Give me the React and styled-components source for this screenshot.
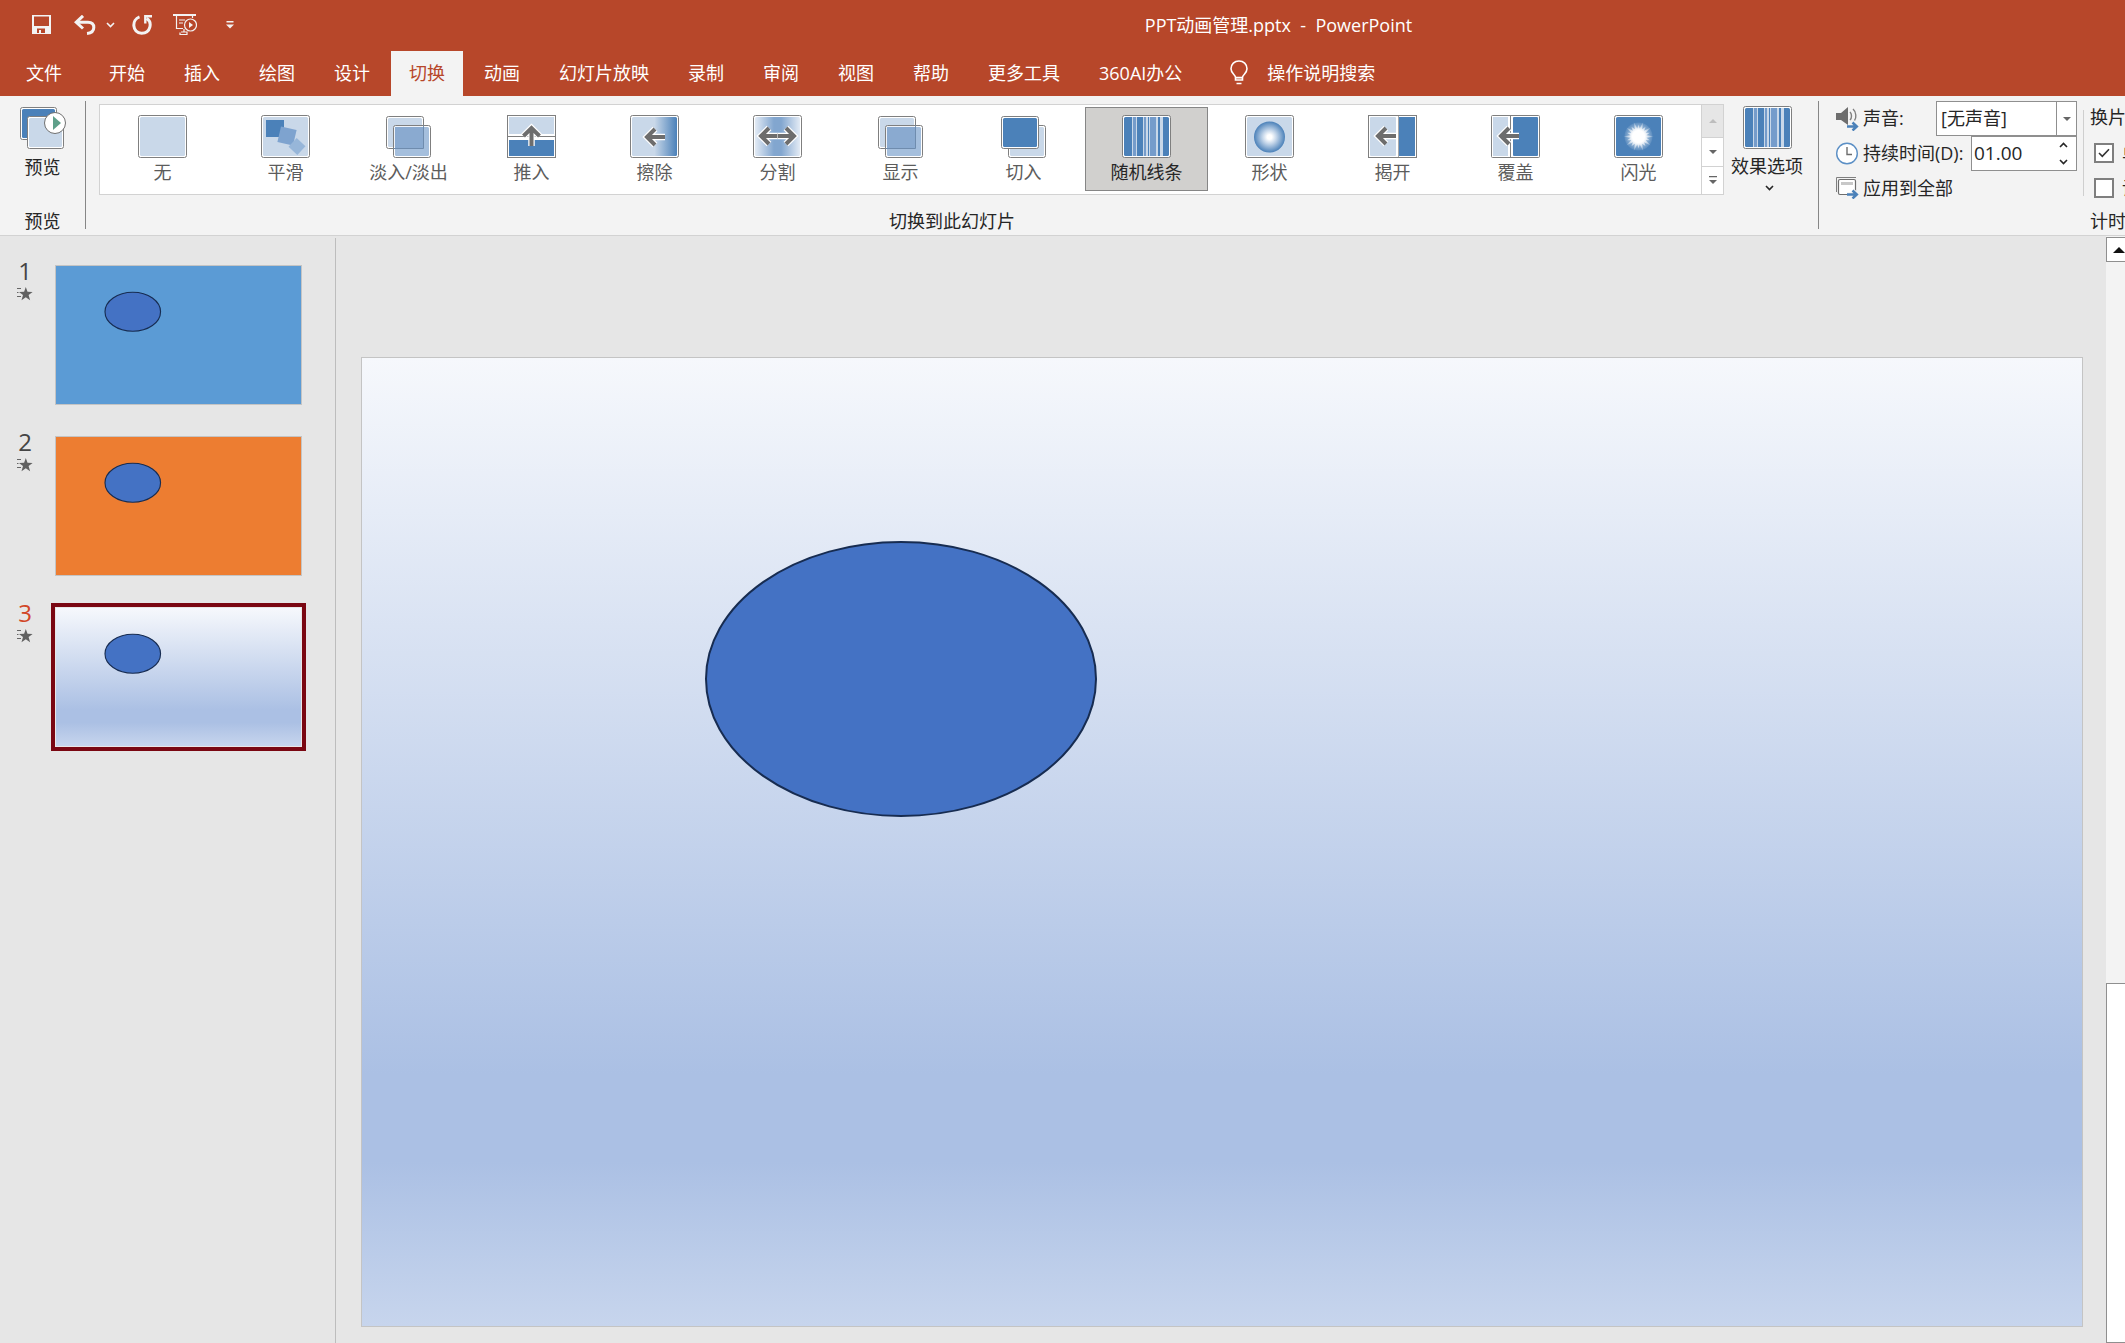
import React from "react";
import styled, { createGlobalStyle, css } from "styled-components";

const c = {
  brand: "#b7472a",
  ribbon: "#f3f3f3",
  canvas: "#e6e6e6",
  line: "#d2d2d2",
  sep: "#868686",
  dark: "#4b81b9",
  mid: "#759ccb",
  light: "#c9d8e9",
  arrow: "#6d6d6d",
  frame: "#7f7f7f",
  text: "#262626",
  softText: "#5c5c5c",
};

const Global = createGlobalStyle`
  * { box-sizing: border-box; }
  html, body { margin: 0; overflow: hidden; }
  body, button, input, select {
    font-family: "Open Sans", "Noto Sans CJK SC", sans-serif;
    font-size: 18px;
    line-height: 24px;
    color: ${c.text};
  }
  button { border: 0; padding: 0; margin: 0; background: none; }
  svg { display: block; flex: none; }
`;

const Window = styled.div`
  min-height: 100vh;
  display: flex;
  flex-direction: column;
  background: ${c.canvas};
  white-space: nowrap;
`;

/* ---------- title bar ---------- */
const TitleBar = styled.header`
  display: flex;
  align-items: center;
  height: 51px;
  padding-bottom: 2px;
  background: ${c.brand};
  color: #fff;
`;
const QuickAccess = styled.div`
  display: flex;
  align-items: center;
  width: 240px;
  padding-left: 32px;
`;
const QuickButton = styled.button`
  display: flex;
  align-items: center;
  gap: 10px;
  margin-right: ${(p) => p.$after || 0}px;
`;
const DocTitle = styled.h1`
  flex: 1;
  margin: 0;
  padding-left: 192px;
  font-size: 18px;
  font-weight: 400;
  text-align: center;
  white-space: pre;
`;

/* ---------- tabs ---------- */
const Tabs = styled.nav`
  display: flex;
  gap: 3px;
  height: 45px;
  padding-left: 8px;
  background: ${c.brand};
`;
const Tab = styled.button`
  padding: 0 18px 2px;
  color: #fff;
  margin-right: ${(p) => (p.$file ? 8 : 0)}px;
  ${(p) =>
    p.$active &&
    css`
      background: ${c.ribbon};
      color: ${c.brand};
    `}
`;
const TellMe = styled.button`
  display: flex;
  align-items: center;
  gap: 19px;
  margin-left: 27px;
  padding-bottom: 2px;
  color: #fff;
`;

/* ---------- ribbon ---------- */
const Ribbon = styled.section`
  display: flex;
  height: 140px;
  background: ${c.ribbon};
  border-bottom: 1px solid ${c.line};
  overflow: hidden;
`;
const Group = styled.div`
  display: flex;
  flex: none;
  flex-direction: column;
  width: ${(p) => (p.$width ? p.$width + "px" : "auto")};
`;
const GroupBody = styled.div`
  display: flex;
  flex: 1;
`;
const GroupLabel = styled.div`
  height: 28px;
  line-height: 28px;
  text-align: center;
`;
const Separator = styled.div`
  flex: none;
  width: 1px;
  margin: 5px 0 6px;
  background: ${c.sep};
`;
const BigButton = styled.button`
  display: flex;
  flex-direction: column;
  align-items: center;
  gap: 5px;
  width: ${(p) => p.$width}px;
  padding-top: ${(p) => p.$top}px;
`;
const MenuMark = styled.span`
  padding: 2px 0 0 4px;
`;

const Gallery = styled.div`
  display: flex;
  height: 91px;
  margin: 8px 0 0 13px;
  background: #fff;
  border: 1px solid ${c.line};
`;
const GalleryItems = styled.div`
  display: flex;
  padding: 2px 1px;
`;
const GalleryItem = styled.button`
  display: flex;
  flex-direction: column;
  align-items: center;
  gap: 2px;
  width: 123px;
  height: 84px;
  padding-top: 7px;
  color: ${(p) => (p.$selected ? c.text : c.softText)};
  border: 1px solid ${(p) => (p.$selected ? c.sep : "transparent")};
  background: ${(p) => (p.$selected ? "#d1d0ce" : "transparent")};
`;
const GalleryScroll = styled.div`
  display: grid;
  grid-template-rows: 32px 1fr 1fr;
  width: 22px;
  border-left: 1px solid ${c.line};
`;
const ScrollStep = styled.button`
  display: grid;
  place-items: center;
  background: ${(p) => (p.disabled ? "#e6e6e6" : "#fff")};
  & + & {
    border-top: 1px solid ${c.line};
  }
`;

const TimingBody = styled.div`
  display: flex;
  flex: 1;
  padding: 5px 0 0 17px;
`;
const TimingColumn = styled.div`
  display: grid;
  grid-template-rows: repeat(3, 35px);
  align-content: start;
  width: ${(p) => (p.$width ? p.$width + "px" : "auto")};
`;
const Field = styled.div`
  display: flex;
  align-items: center;
  gap: 4px;
`;
const FieldLabel = styled.label`
  flex: 1;
  padding-bottom: 2px;
`;
const ApplyButton = styled.button`
  display: flex;
  align-items: center;
  gap: 4px;
  padding-bottom: 2px;
`;
const Box = styled.div`
  display: flex;
  width: ${(p) => p.$width}px;
  height: 35px;
  background: #fff;
  border: 1px solid #8f8f8f;
`;
const SoundSelect = styled.select`
  flex: 1;
  min-width: 0;
  padding: 0 4px 2px;
  border: 0;
  background: transparent;
  appearance: none;
`;
const ArrowCell = styled.span`
  display: grid;
  place-items: center;
  width: 20px;
  border-left: 1px solid #8f8f8f;
`;
const DurationInput = styled.input`
  flex: 1;
  min-width: 0;
  padding: 0 2px 2px;
  border: 0;
  background: transparent;
  font-size: 19px;
`;
const Spinner = styled.div`
  display: grid;
  width: 26px;
`;
const SpinButton = styled.button`
  display: grid;
  place-items: center;
`;
const SoftDivider = styled.div`
  width: 1px;
  height: 86px;
  margin: 9px 6px 0;
  background: #cfcfcf;
`;
const Caption = styled.div`
  line-height: 32px;
`;
const CheckRow = styled.label`
  display: flex;
  align-items: center;
  gap: 8px;
  padding: 0 0 2px 4px;
`;
const CheckStack = styled.span`
  display: grid;
  place-items: center;
  & > * {
    grid-area: 1 / 1;
  }
`;
const CheckInput = styled.input`
  appearance: none;
  width: 20px;
  height: 20px;
  margin: 0;
  background: #fff;
  border: 2px solid #7f7f7f;
`;

/* ---------- workspace ---------- */
const Workspace = styled.main`
  display: flex;
  flex: 1;
`;
const SlidePane = styled.aside`
  display: flex;
  flex: none;
  flex-direction: column;
  gap: 23px;
  width: 336px;
  margin-top: 2px;
  padding-top: 23px;
  border-right: 1px solid #bdbdbd;
`;
const SlideEntry = styled.button`
  display: flex;
  align-items: flex-start;
  padding-left: 17px;
`;
const SlideMeta = styled.span`
  display: flex;
  flex-direction: column;
  align-items: center;
  gap: 6px;
  width: 16px;
  margin-right: 18px;
  font-size: 24px;
  line-height: 20px;
  color: ${(p) => (p.$selected ? "#d24726" : "#444")};
`;
const ThumbFrame = styled.span`
  display: block;
  padding: 4px;
  background: ${(p) => (p.$selected ? "#7a0712" : "transparent")};
`;
const SlideSurface = styled.span`
  display: block;
  width: ${(p) => (p.$thumb ? "247px" : "100%")};
  height: ${(p) => (p.$thumb ? "140px" : "auto")};
  aspect-ratio: 1722 / 970;
  border: 1px solid ${(p) => (p.$light ? "#e9e6e6" : "#c4c4c4")};
  background: ${(p) => p.$fill};
  & > svg {
    width: 100%;
    height: 100%;
  }
`;
const Stage = styled.div`
  display: flex;
  flex: 1;
  align-items: flex-end;
  padding: 0 23px 16px 25px;
`;
const ScrollTrack = styled.div`
  display: flex;
  flex: none;
  flex-direction: column;
  width: 19px;
  padding-top: 1px;
  background: ${c.ribbon};
  overflow: hidden;
`;
const ScrollUp = styled.button`
  display: grid;
  place-items: center;
  width: 25px;
  height: 25px;
  border: 1px solid #8f8f8f;
  background: #fff;
`;
const ScrollThumb = styled.div`
  width: 25px;
  height: 360px;
  margin-top: auto;
  border: 1px solid #8f8f8f;
  background: #fff;
`;

/* ---------- drawings ---------- */
const Panel = ({ x = 0, y = 0, w = 49, h = 43, fill = c.light, opacity = 1 }) => (
  <g>
    <rect x={x + 0.5} y={y + 0.5} width={w - 1} height={h - 1} rx="2" fill="#fff" fillOpacity={opacity} stroke={c.frame} />
    <rect x={x + 2} y={y + 2} width={w - 4} height={h - 4} rx="1.5" fill={fill} fillOpacity={opacity === 1 ? 1 : 0.8} />
  </g>
);

const Arrow = ({ d }) => (
  <g fill="none" strokeLinejoin="miter">
    <path d={d} stroke="#fff" strokeWidth="6.5" />
    <path d={d} stroke={c.arrow} strokeWidth="4" />
  </g>
);

const stripes = [
  [10, 1, c.light], [11, 3, c.mid], [14, 1, c.light], [21, 1, c.light], [22, 2, c.mid],
  [24, 2, c.light], [27, 1, c.light], [28, 6, c.mid], [34, 2, c.light], [38, 3, c.light],
];
const Bars = () => (
  <>
    <Panel fill={c.dark} />
    {stripes.map(([x, w, f]) => (
      <rect key={x} x={x} y="2" width={w} height="39" fill={f} />
    ))}
  </>
);

const burst = Array.from({ length: 40 }, (_, i) => {
  const a = (i / 40) * Math.PI * 2;
  const r = i % 2 ? 8 : i % 4 ? 12 : 16;
  return `${24.5 + r * Math.cos(a)},${21.5 + r * Math.sin(a)}`;
}).join(" ");

const drawings = {
  none: <Panel />,
  morph: (
    <>
      <Panel />
      <rect x="5" y="5" width="18" height="17" fill={c.dark} />
      <rect x="18" y="13" width="16" height="16" fill="#7ea3cf" transform="rotate(13 26 21)" />
      <rect x="30" y="25.5" width="12" height="12" fill="#97b6d9" transform="rotate(43 36 31.5)" />
    </>
  ),
  fade: (
    <>
      <Panel x={2} y={1} w={38} h={33} />
      <Panel x={9} y={10} w={38} h={33} fill="#8fafd5" opacity={0.7} />
      <rect x="11" y="12" width="28" height="21" fill="#8aaad0" />
      <path d="M9.5 33.5H39.5V10.5" fill="none" stroke="#6f8cae" />
    </>
  ),
  push: (
    <>
      <rect x=".5" y=".5" width="48" height="42" fill="#fff" stroke={c.frame} />
      <rect x="2" y="2" width="45" height="17" fill={c.light} />
      <path d="M1 21.5H48" stroke={c.frame} />
      <rect x="2" y="25" width="45" height="16" fill={c.dark} />
      <Arrow d="M24.5 31V13M16.5 21L24.5 13L32.5 21" />
    </>
  ),
  wipe: (
    <>
      <linearGradient id="wipe">
        <stop offset=".5" stopColor={c.light} />
        <stop offset="1" stopColor={c.dark} />
      </linearGradient>
      <Panel fill="url(#wipe)" />
      <Arrow d="M35 22H17M25 14L17 22L25 30" />
    </>
  ),
  split: (
    <>
      <linearGradient id="split">
        <stop offset="0" stopColor="#e3ebf5" />
        <stop offset=".42" stopColor="#82a6cf" />
        <stop offset=".58" stopColor="#82a6cf" />
        <stop offset="1" stopColor="#e3ebf5" />
      </linearGradient>
      <Panel fill="url(#split)" />
      <Arrow d="M8 21H41M16 13L8 21L16 29M33 13L41 21L33 29" />
      <path d="M24.5 18.5V23.5" stroke="#b9b9b9" />
    </>
  ),
  cut: (
    <>
      <Panel x={9} y={10} w={38} h={33} />
      <Panel x={2} y={1} w={38} h={33} fill={c.dark} />
    </>
  ),
  bars: <Bars />,
  shape: (
    <>
      <radialGradient id="shape">
        <stop offset=".15" stopColor="#fff" />
        <stop offset=".45" stopColor="#c3d5e9" />
        <stop offset="1" stopColor={c.dark} />
      </radialGradient>
      <Panel />
      <circle cx="24.5" cy="22" r="15.5" fill="url(#shape)" />
    </>
  ),
  uncover: (
    <>
      <rect x=".5" y=".5" width="48" height="42" fill="#fff" stroke={c.frame} />
      <rect x="2" y="2" width="26" height="39" rx="1" fill={c.light} />
      <path d="M30.5 1V42" stroke="#a8a8a8" />
      <rect x="31" y="2" width="16" height="39" fill={c.dark} />
      <Arrow d="M28 21H10M18 13L10 21L18 29" />
    </>
  ),
  cover: (
    <>
      <rect x=".5" y=".5" width="48" height="42" rx="1" fill="#fff" stroke={c.frame} />
      <rect x="2" y="2" width="15" height="39" fill={c.light} />
      <path d="M19.5 1V42" stroke={c.frame} />
      <rect x="22" y="2" width="25" height="39" rx="1" fill={c.dark} />
      <Arrow d="M28 21H10M18 13L10 21L18 29" />
    </>
  ),
  flash: (
    <>
      <radialGradient id="flash" gradientUnits="userSpaceOnUse" cx="24.5" cy="21.5" r="15">
        <stop offset=".4" stopColor="#fff" />
        <stop offset=".75" stopColor="#fff" stopOpacity=".45" />
        <stop offset="1" stopColor="#fff" stopOpacity=".05" />
      </radialGradient>
      <Panel fill={c.dark} />
      <polygon points={burst} fill="url(#flash)" />
      <circle cx="24.5" cy="21.5" r="14" fill="url(#flash)" fillOpacity=".6" />
    </>
  ),
};

const TransitionIcon = ({ kind }) => (
  <svg width="49" height="43" viewBox="0 0 49 43" aria-hidden="true">
    {drawings[kind]}
  </svg>
);

const SaveIcon = () => (
  <svg width="19" height="19" viewBox="0 0 19 19" aria-hidden="true">
    <path d="M0 0H19V19H0ZM2 1.5V11H17V1.5Z" fill="#f3f3f3" fillRule="evenodd" />
    <path d="M5 13.5H13V18H9V15H7V18H5Z" fill={c.brand} />
  </svg>
);
const UndoIcon = () => (
  <svg width="22" height="20" viewBox="0 0 22 20" fill="none" stroke="#f3f3f3" aria-hidden="true">
    <path d="M9 .8L2.2 7.3L9 13.5" strokeWidth="3" />
    <path d="M3 7.3H14C18 7.3 19.8 9.7 19.8 12.5C19.8 16 17.5 18 13 18.4" strokeWidth="3" />
  </svg>
);
const RedoIcon = () => (
  <svg width="20" height="20" viewBox="0 0 20 20" fill="none" stroke="#f3f3f3" aria-hidden="true">
    <path d="M7.5 1.8C-.5 4.5-.2 17.8 9.6 18.2C19 18 20.5 7 14.6 3.4" strokeWidth="3" />
    <path d="M20 1.2H13.3V8.6" strokeWidth="2.4" />
  </svg>
);
const ShowIcon = () => (
  <svg width="24" height="22" viewBox="0 0 24 22" fill="none" stroke="#f3f3f3" aria-hidden="true">
    <path d="M0 1H23" strokeWidth="2" />
    <path d="M3.5 2V14.5H10M19.5 2V4M6 6H12M6 9H10M11 15V18M8 18H14V20.5H7V18.5" strokeWidth="1.2" />
    <circle cx="17.5" cy="11" r="6" strokeWidth="1.2" />
    <path d="M16 8L20 11L16 14Z" fill="#f3f3f3" stroke="none" />
  </svg>
);
const CustomizeIcon = () => (
  <svg width="8" height="8" viewBox="0 0 8 8" fill="#f3f3f3" aria-hidden="true">
    <path d="M.5 0H7.5V1.4H.5ZM0 3.5H8L4 7.5Z" />
  </svg>
);
const Chevron = ({ up, color = c.text, size = 9 }) => (
  <svg width={size} height="6" viewBox="0 0 9 6" fill="none" aria-hidden="true">
    <path d={up ? "M1 5L4.5 1.5L8 5" : "M1 1L4.5 4.5L8 1"} stroke={color} strokeWidth="1.6" />
  </svg>
);
const Triangle = ({ up, color = "#666", w = 8, line }) => (
  <svg width={w} height={line ? 8 : w / 2} viewBox={line ? "0 0 8 8" : "0 0 8 4"} fill={color} aria-hidden="true">
    {line ? <path d="M0 0H8V1.2H0ZM0 4H8L4 8Z" /> : <path d={up ? "M0 4H8L4 0Z" : "M0 0H8L4 4Z"} />}
  </svg>
);
const BulbIcon = () => (
  <svg width="18" height="25" viewBox="0 0 18 25" fill="none" stroke="#fff" strokeWidth="1.6" aria-hidden="true">
    <path d="M5.5 20V17.5C5.5 14.5 1 13.5 1 8.8C1 4 4.5 1 9 1S17 4 17 8.8C17 13.5 12.5 14.5 12.5 17.5V20Z" />
    <path d="M5.5 17.6H12.5M6.5 23.5H11.5" />
  </svg>
);
const PreviewIcon = () => (
  <svg width="46" height="43" viewBox="0 0 46 43" aria-hidden="true">
    <Panel w={37} h={33} fill={c.dark} />
    <Panel x={7} y={9} w={37} h={33} />
    <circle cx="35" cy="16" r="10.5" fill="#fff" stroke="#707070" />
    <path d="M33 9L41 16L33 23Z" fill="#5fa08a" />
  </svg>
);
const SoundIcon = () => (
  <svg width="23" height="24" viewBox="0 0 23 24" fill="none" aria-hidden="true">
    <path d="M0 6H5L12 0V18L5 13H0Z" fill={c.arrow} />
    <path d="M14 5C16 7 16 11 14 13M17 2C20.5 5 20.5 11 18.5 13.5" stroke={c.frame} strokeWidth="1.4" />
    <path d="M11 19.5H21M16.5 15.5L20.8 19.5L16.5 23.5" stroke={c.dark} strokeWidth="2.5" />
  </svg>
);
const ClockIcon = () => (
  <svg width="23" height="23" viewBox="0 0 23 23" fill="none" aria-hidden="true">
    <circle cx="11" cy="11.5" r="10.3" fill="#fff" stroke="#5b8fc5" strokeWidth="1.4" />
    <path d="M11 5V12.5H16" stroke={c.arrow} strokeWidth="1.4" />
  </svg>
);
const ApplyIcon = () => (
  <svg width="23" height="22" viewBox="0 0 23 22" fill="none" aria-hidden="true">
    <path d="M.5 15V.5H20" stroke={c.frame} />
    <rect x="2.5" y="2.5" width="17" height="15" rx="1.5" fill="#fff" stroke={c.arrow} strokeWidth="1.2" />
    <path d="M5 6.5H17" stroke="#c8c8c8" strokeWidth="3" />
    <path d="M11 17.5H21M16.5 13.5L20.8 17.5L16.5 21.5" stroke="#f3f3f3" strokeWidth="4.5" />
    <path d="M11 17.5H21M16.5 13.5L20.8 17.5L16.5 21.5" stroke={c.dark} strokeWidth="2.5" />
  </svg>
);
const CheckMark = () => (
  <svg width="12" height="10" viewBox="0 0 12 10" fill="none" aria-hidden="true">
    <path d="M1 5L4.3 8.3L11 1.2" stroke="#333" strokeWidth="1.6" />
  </svg>
);
const StarIcon = () => (
  <svg width="16" height="14" viewBox="0 0 16 14" aria-hidden="true">
    <path d="M0 1.5H4M0 5.5H1.5M0 9.5H4" stroke="#666" />
    <path d="M8.8 0L10.5 4.8L15.6 5L11.6 8.1L13.1 13.2L8.8 10.3L4.5 13.2L6 8.1L2 5L7.1 4.8Z" fill="#606060" />
  </svg>
);
const SlideDrawing = ({ stroke }) => (
  <svg viewBox="0 0 1720 968" preserveAspectRatio="none" aria-hidden="true">
    <ellipse cx="539" cy="321" rx="195" ry="137" fill="#4472c4" stroke="#172c51" strokeWidth={stroke} />
  </svg>
);

/* ---------- data ---------- */
const tabs = [
  "文件", "开始", "插入", "绘图", "设计", "切换", "动画", "幻灯片放映", "录制",
  "审阅", "视图", "帮助", "更多工具", "360AI办公",
];
const transitions = [
  ["none", "无"], ["morph", "平滑"], ["fade", "淡入/淡出"], ["push", "推入"], ["wipe", "擦除"],
  ["split", "分割"], ["fade", "显示"], ["cut", "切入"], ["bars", "随机线条"], ["shape", "形状"],
  ["uncover", "揭开"], ["cover", "覆盖"], ["flash", "闪光"],
];
const gradient = "linear-gradient(#f6f8fc 0%, #abc0e4 74%, #abc0e4 83%, #c7d5ed 100%)";
const slides = [
  { n: 1, fill: "#5b9bd5" },
  { n: 2, fill: "#ed7d31" },
  { n: 3, fill: gradient, selected: true },
];

export default function App() {
  return (
    <Window>
      <Global />
      <TitleBar>
        <QuickAccess>
          <QuickButton aria-label="保存" $after={23}><SaveIcon /></QuickButton>
          <QuickButton aria-label="撤消" $after={17}><UndoIcon /><Chevron color="#f3f3f3" /></QuickButton>
          <QuickButton aria-label="重复" $after={21}><RedoIcon /></QuickButton>
          <QuickButton aria-label="从头开始" $after={29}><ShowIcon /></QuickButton>
          <QuickButton aria-label="自定义快速访问工具栏"><CustomizeIcon /></QuickButton>
        </QuickAccess>
        <DocTitle>{"PPT动画管理.pptx  -  PowerPoint"}</DocTitle>
      </TitleBar>
      <Tabs>
        {tabs.map((t) => (
          <Tab key={t} $file={t === "文件"} $active={t === "切换"}>{t}</Tab>
        ))}
        <TellMe><BulbIcon />操作说明搜索</TellMe>
      </Tabs>

      <Ribbon>
        <Group $width={85}>
          <GroupBody>
            <BigButton $width={87} $top={11}><PreviewIcon />预览</BigButton>
          </GroupBody>
          <GroupLabel>预览</GroupLabel>
        </Group>
        <Separator />
        <Group $width={1732}>
          <GroupBody>
            <Gallery>
              <GalleryItems>
                {transitions.map(([kind, name]) => (
                  <GalleryItem key={name} $selected={kind === "bars"}>
                    <TransitionIcon kind={kind} />
                    {name}
                  </GalleryItem>
                ))}
              </GalleryItems>
              <GalleryScroll>
                <ScrollStep disabled aria-label="上一行"><Triangle up color="#bdbdbd" /></ScrollStep>
                <ScrollStep aria-label="下一行"><Triangle /></ScrollStep>
                <ScrollStep aria-label="其他"><Triangle line /></ScrollStep>
              </GalleryScroll>
            </Gallery>
            <BigButton $width={86} $top={10}>
              <TransitionIcon kind="bars" />
              效果选项
              <MenuMark><Chevron /></MenuMark>
            </BigButton>
          </GroupBody>
          <GroupLabel>切换到此幻灯片</GroupLabel>
        </Group>
        <Separator />
        <Group $width={578}>
          <TimingBody>
            <TimingColumn $width={241}>
              <Field>
                <SoundIcon />
                <FieldLabel htmlFor="sound">声音:</FieldLabel>
                <Box $width={141}>
                  <SoundSelect id="sound"><option>[无声音]</option></SoundSelect>
                  <ArrowCell><Triangle /></ArrowCell>
                </Box>
              </Field>
              <Field>
                <ClockIcon />
                <FieldLabel htmlFor="duration">持续时间(D):</FieldLabel>
                <Box $width={106}>
                  <DurationInput id="duration" defaultValue="01.00" />
                  <Spinner>
                    <SpinButton aria-label="增加"><Chevron up /></SpinButton>
                    <SpinButton aria-label="减少"><Chevron /></SpinButton>
                  </Spinner>
                </Box>
              </Field>
              <ApplyButton><ApplyIcon />应用到全部</ApplyButton>
            </TimingColumn>
            <SoftDivider />
            <TimingColumn>
              <Caption>换片方式</Caption>
              <CheckRow>
                <CheckStack><CheckInput type="checkbox" defaultChecked /><CheckMark /></CheckStack>
                单击鼠标时
              </CheckRow>
              <CheckRow>
                <CheckStack><CheckInput type="checkbox" /></CheckStack>
                设置自动换片时间:
              </CheckRow>
            </TimingColumn>
          </TimingBody>
          <GroupLabel>计时</GroupLabel>
        </Group>
      </Ribbon>

      <Workspace>
        <SlidePane>
          {slides.map((s) => (
            <SlideEntry key={s.n}>
              <SlideMeta $selected={s.selected}>{s.n}<StarIcon /></SlideMeta>
              <ThumbFrame $selected={s.selected}>
                <SlideSurface $thumb $light={s.selected} $fill={s.fill}>
                  <SlideDrawing stroke={8} />
                </SlideSurface>
              </ThumbFrame>
            </SlideEntry>
          ))}
        </SlidePane>
        <Stage>
          <SlideSurface $fill={gradient}>
            <SlideDrawing stroke={2} />
          </SlideSurface>
        </Stage>
        <ScrollTrack>
          <ScrollUp aria-label="向上滚动"><Triangle up color="#111" w={12} /></ScrollUp>
          <ScrollThumb />
        </ScrollTrack>
      </Workspace>
    </Window>
  );
}
